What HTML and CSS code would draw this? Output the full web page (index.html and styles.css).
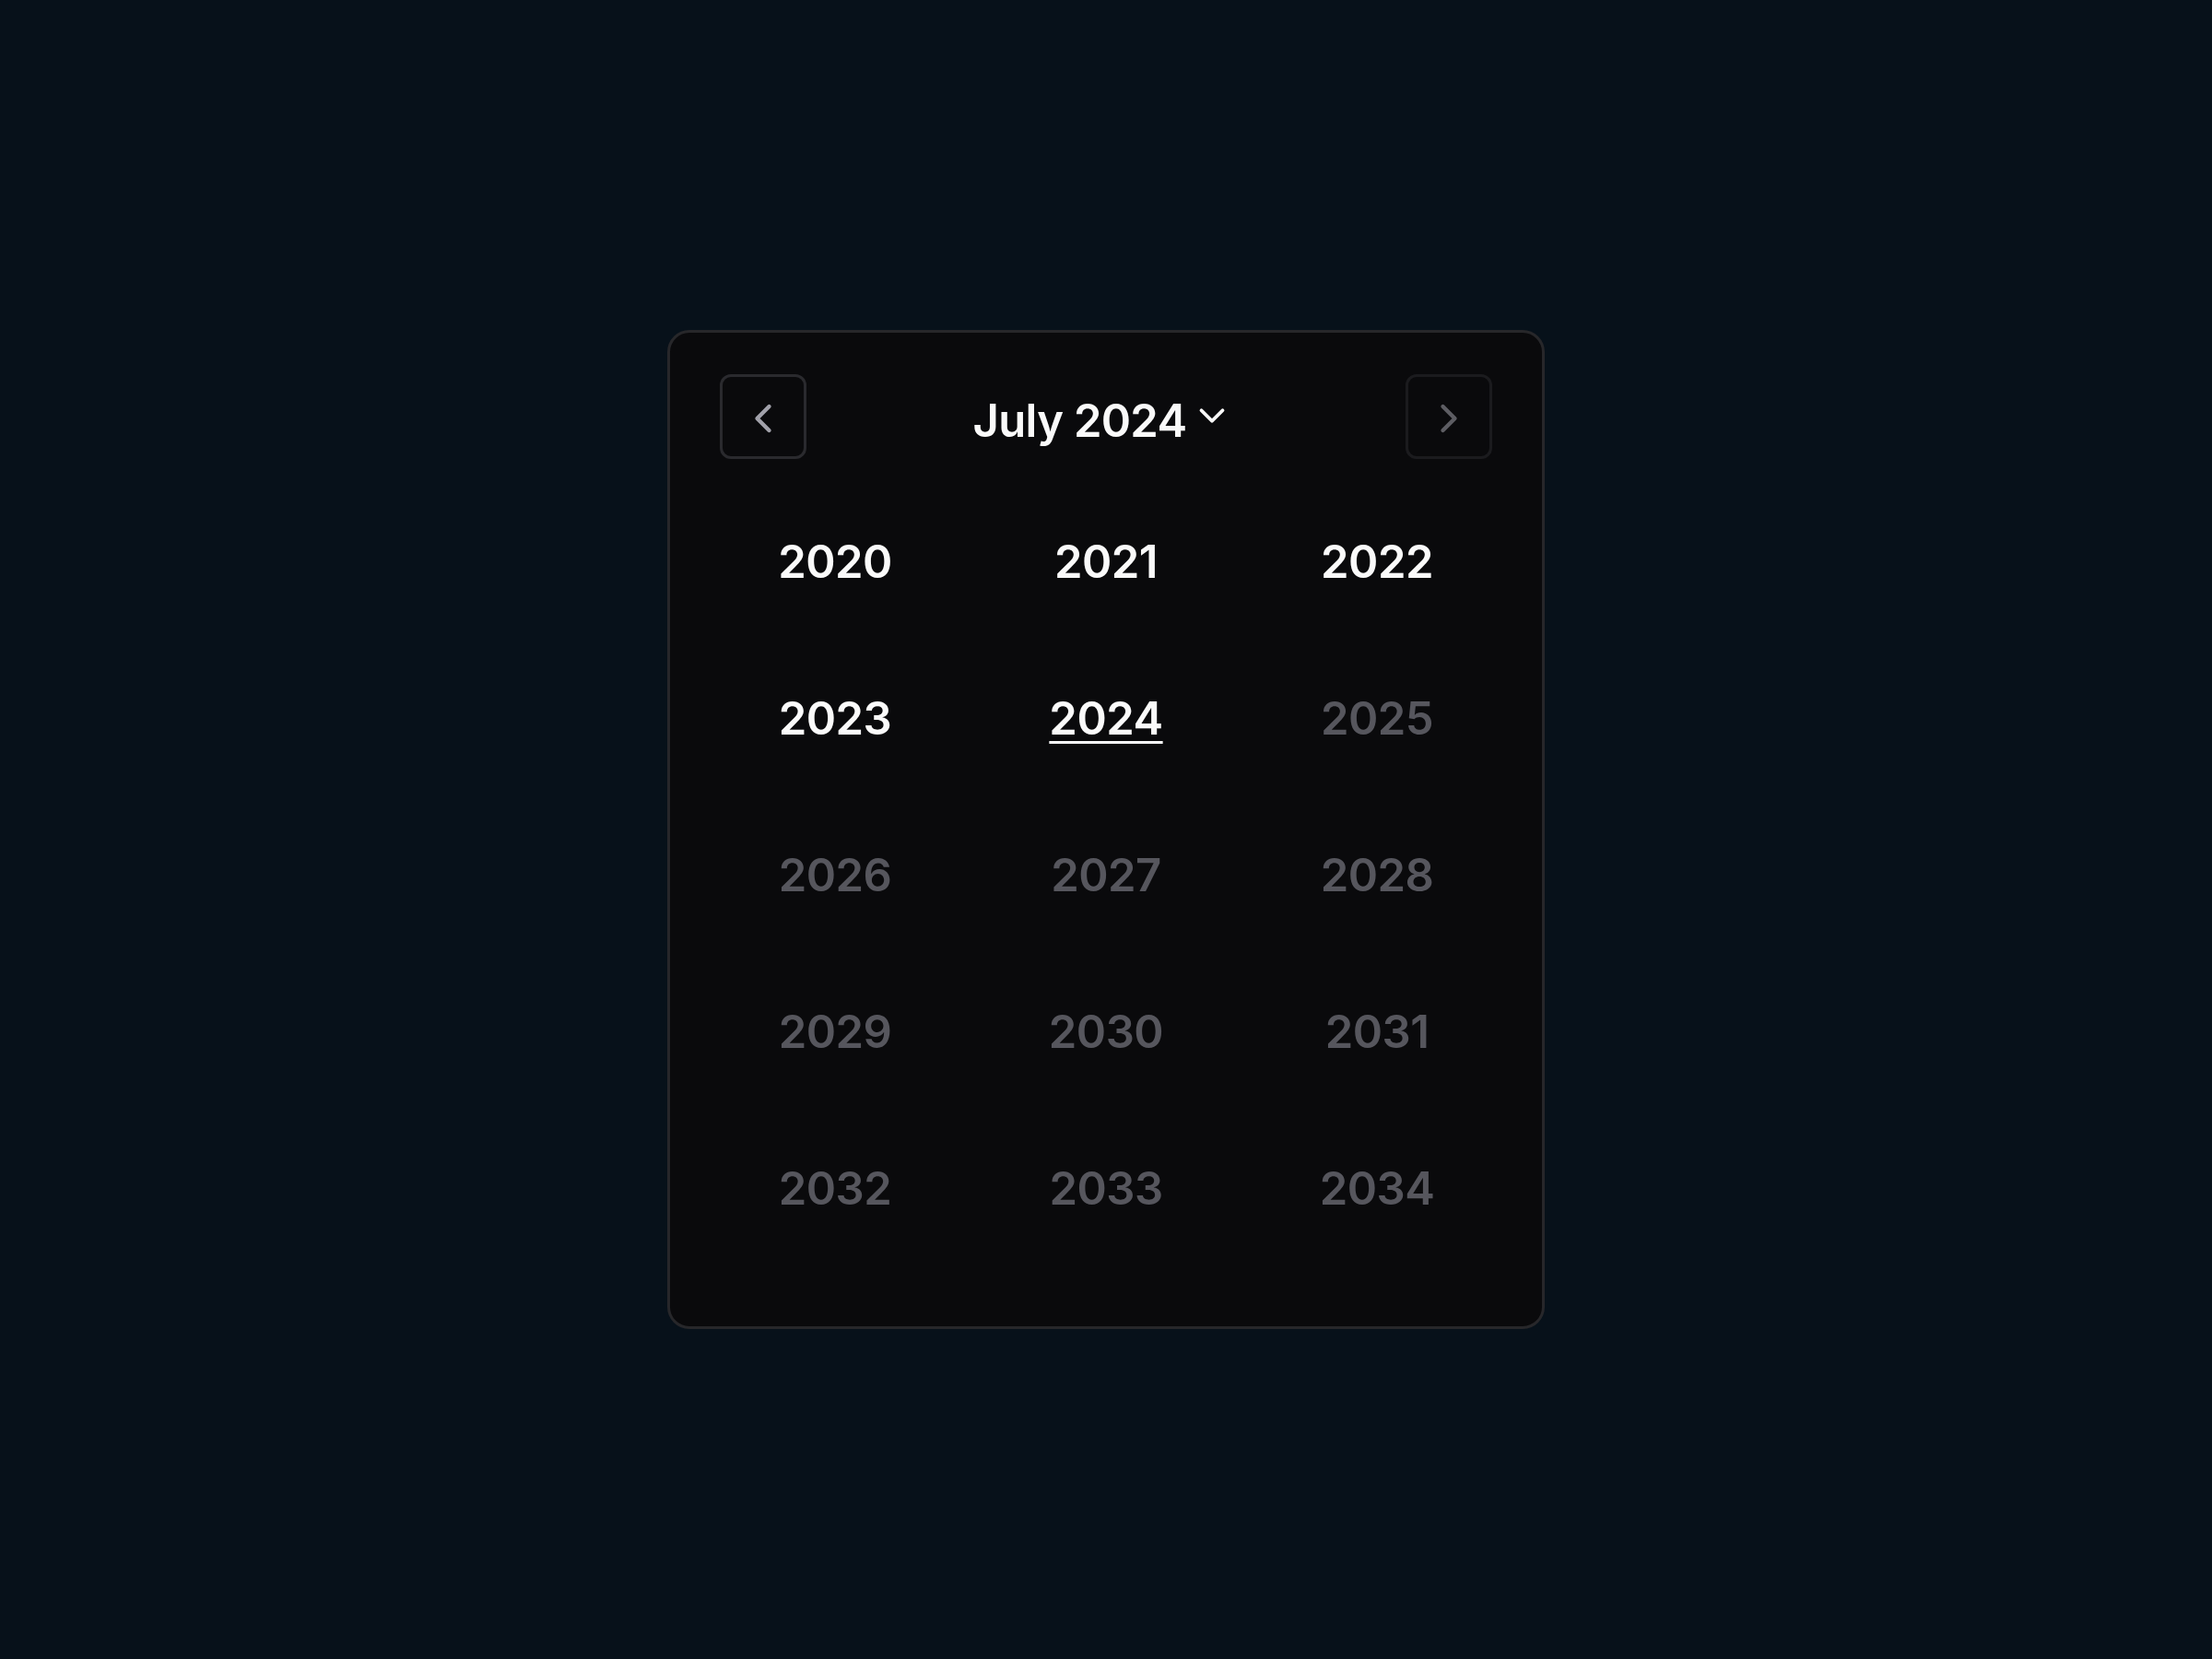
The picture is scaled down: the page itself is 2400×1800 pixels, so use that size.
FILE: index.html
```html
<!DOCTYPE html>
<html lang="en">
<head>
<meta charset="utf-8">
<title>Year picker</title>
<link rel="stylesheet" href="styles.css">
</head>
<body>
<div class="card">
  <div class="header">
    <button class="nav" aria-label="Previous">
      <svg class="nav-icon" viewBox="0 0 24 24" fill="none" stroke="currentColor" stroke-width="2" stroke-linecap="round" stroke-linejoin="round"><path d="m15 18-6-6 6-6"/></svg>
    </button>
    <div class="title">
      <span>July 2024</span>
      <svg class="title-icon" viewBox="0 0 24 24" fill="none" stroke="currentColor" stroke-width="2" stroke-linecap="round" stroke-linejoin="round"><path d="m6 9 6 6 6-6"/></svg>
    </div>
    <button class="nav nav-disabled" aria-label="Next">
      <svg class="nav-icon" viewBox="0 0 24 24" fill="none" stroke="currentColor" stroke-width="2" stroke-linecap="round" stroke-linejoin="round"><path d="m9 18 6-6-6-6"/></svg>
    </button>
  </div>
  <div class="grid">
    <div class="year">2020</div>
    <div class="year">2021</div>
    <div class="year">2022</div>
    <div class="year">2023</div>
    <div class="year"><span class="current">2024</span></div>
    <div class="year dim">2025</div>
    <div class="year dim">2026</div>
    <div class="year dim">2027</div>
    <div class="year dim">2028</div>
    <div class="year dim">2029</div>
    <div class="year dim">2030</div>
    <div class="year dim">2031</div>
    <div class="year dim">2032</div>
    <div class="year dim">2033</div>
    <div class="year dim">2034</div>
  </div>
</div>
</body>
</html>
```
FILE: styles.css
```css
html, body {
  margin: 0;
  height: 100%;
}
body {
  background: #07111a;
  display: flex;
  align-items: center;
  justify-content: center;
  font-family: Inter, "Noto Sans", sans-serif;
  color: #fafafa;
}
.card {
  box-sizing: border-box;
  width: 952px;
  height: 1084px;
  background: #0a0a0c;
  border: 3px solid #27272a;
  border-radius: 24px;
  padding: 45px 54px 63px;
}
.header {
  height: 92px;
  display: flex;
  align-items: center;
  justify-content: space-between;
}
.nav {
  box-sizing: border-box;
  width: 94px;
  height: 92px;
  border: 3px solid #2a2a2e;
  border-radius: 12px;
  background: transparent;
  color: #a1a1aa;
  display: flex;
  align-items: center;
  justify-content: center;
  padding: 0;
}
.nav-disabled {
  opacity: 0.55;
}
.nav-icon {
  width: 52px;
  height: 52px;
  margin-top: 3px;
}
.title {
  display: flex;
  align-items: center;
  gap: 5px;
  font-size: 49px;
  font-weight: 600;
  letter-spacing: -0.7px;
  margin-top: 8px;
  margin-right: 6px;
}
.title-icon {
  width: 46px;
  height: 46px;
  margin-top: -10px;
}
.grid {
  margin-top: 26px;
  display: grid;
  grid-template-columns: repeat(3, 250px);
  grid-auto-rows: 170px;
  column-gap: 44px;
}
.year {
  display: flex;
  align-items: center;
  justify-content: center;
  font-size: 49px;
  font-weight: 600;
  letter-spacing: -0.5px;
  color: #fafafa;
}
.year.dim {
  color: #56565d;
}
.current {
  text-decoration: underline;
  text-decoration-thickness: 3px;
  text-underline-offset: 7px;
}
```
